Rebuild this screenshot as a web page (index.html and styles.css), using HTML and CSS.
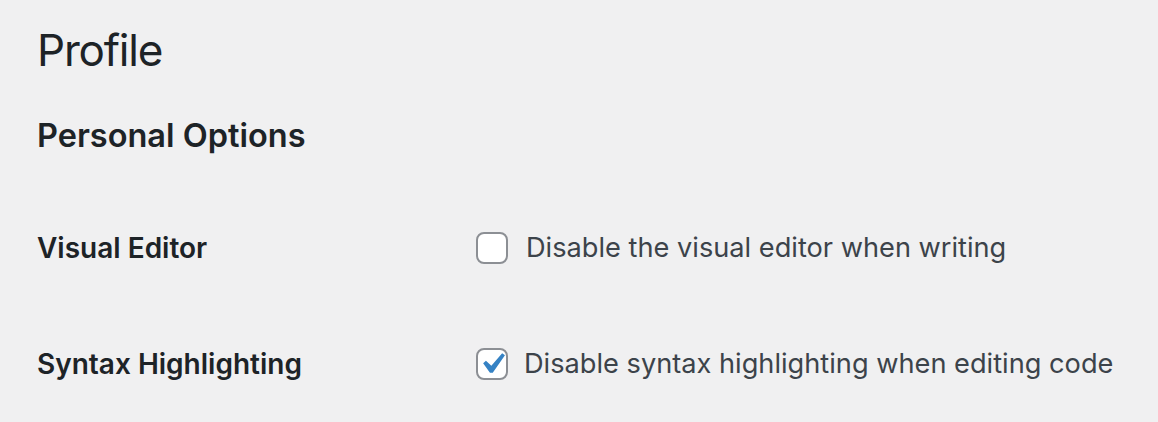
FILE: index.html
```html
<!DOCTYPE html>
<html>
<head>
<meta charset="utf-8">
<link rel="stylesheet" href="styles.css">
</head>
<body>
<div class="wrap">
  <h1 class="title">Profile</h1>
  <h2 class="section">Personal Options</h2>
  <div class="rows">
    <div class="row">
      <div class="label">Visual Editor</div>
      <label class="field"><span class="box"></span><span class="text">Disable the visual editor when writing</span></label>
    </div>
    <div class="row">
      <div class="label">Syntax Highlighting</div>
      <label class="field tight"><span class="box checked"><svg viewBox="0 0 20 20" width="42" height="42"><path d="M14.83 4.89l1.34.94-5.81 8.38H9.02L5.78 9.67l1.34-1.25 2.57 2.4z" fill="#3582c4"/></svg></span><span class="text">Disable syntax highlighting when editing code</span></label>
    </div>
  </div>
</div>
</body>
</html>
```
FILE: styles.css
```css
html, body {
  margin: 0;
  padding: 0;
  background: #f0f0f1;
}
body {
  font-family: Inter, "Noto Sans", sans-serif;
  color: #3c434a;
}
.wrap {
  padding: 0 0 0 37px;
}
.title {
  margin: 0;
  padding-top: 20px;
  font-size: 44px;
  font-weight: 400;
  line-height: 60px;
  color: #1d2327;
  letter-spacing: -1.2px;
}
.section {
  margin: 36px 0 0;
  font-size: 32.5px;
  font-weight: 600;
  line-height: 40px;
  color: #1d2327;
}
.rows {
  display: flex;
  flex-direction: column;
  margin-top: 72px;
  gap: 76px;
}
.row {
  display: flex;
  align-items: center;
  height: 40px;
}
.label {
  width: 439px;
  font-size: 28px;
  font-weight: 600;
  color: #1d2327;
}
.field {
  display: flex;
  align-items: center;
  gap: 18px;
}
.field.tight {
  gap: 16px;
}
.box {
  box-sizing: border-box;
  width: 32px;
  height: 32px;
  border: 2px solid #8c8f94;
  border-radius: 8px;
  background: #fff;
  display: flex;
  align-items: center;
  justify-content: center;
}
.box svg {
  display: block;
  flex: none;
  margin: -7px;
}
.text {
  font-size: 27.2px;
  line-height: 40px;
}
```
